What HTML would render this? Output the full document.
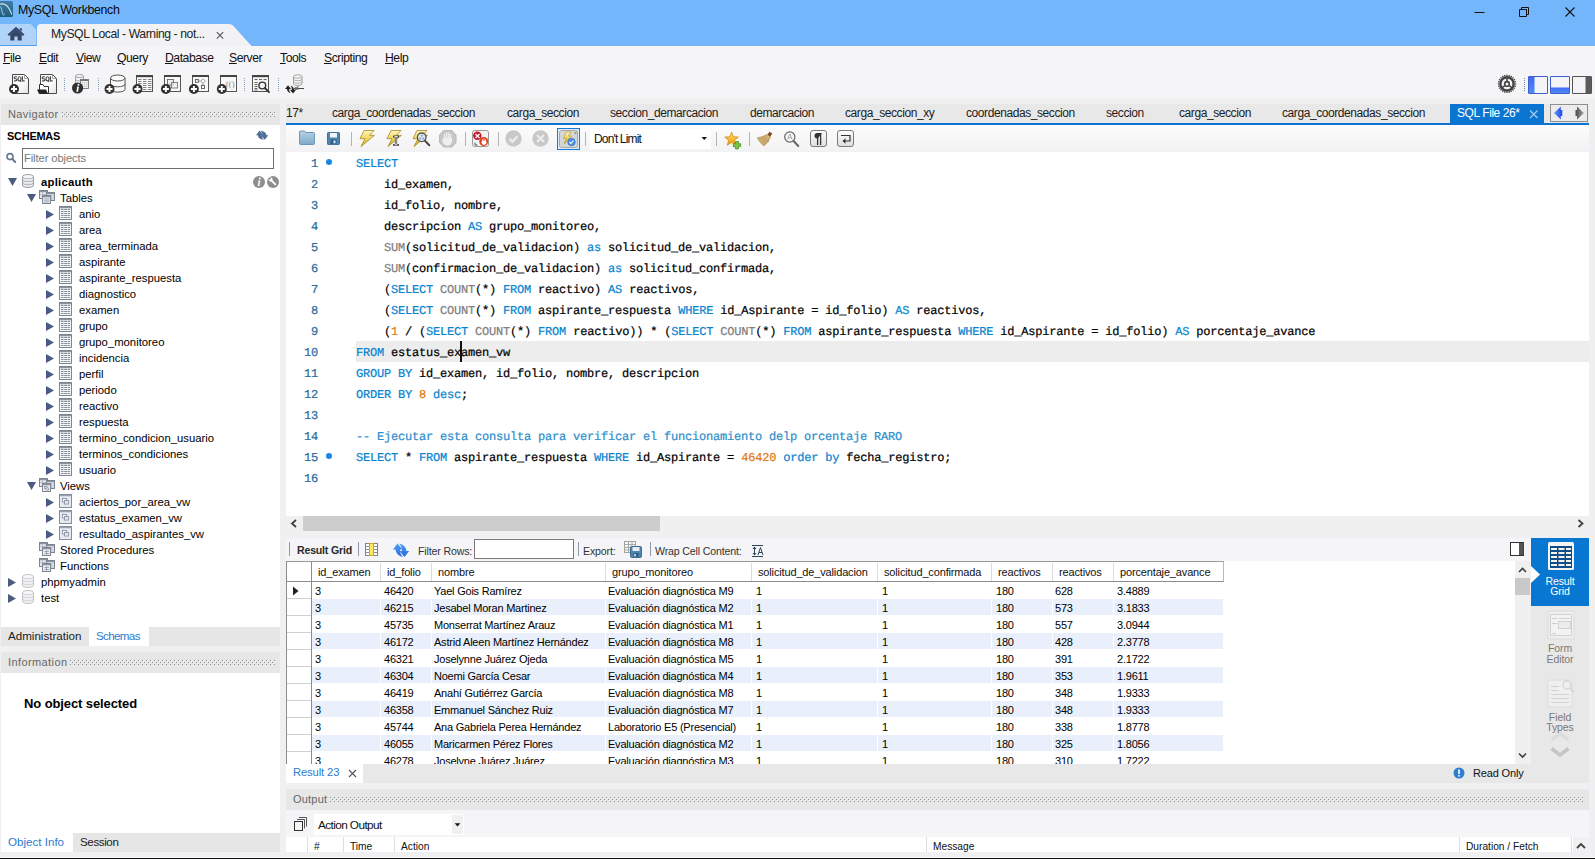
<!DOCTYPE html>
<html>
<head>
<meta charset="utf-8">
<title>MySQL Workbench</title>
<style>
*{box-sizing:border-box;margin:0;padding:0}
html,body{width:1595px;height:859px;overflow:hidden;background:#f0f0f2}
body{font-family:"Liberation Sans",sans-serif;font-size:11px;color:#000;position:relative}
.abs{position:absolute}
.t{position:absolute;white-space:pre;line-height:1}
/* title */
#titlebar{left:0;top:0;width:1595px;height:46px;background:#74b6fb}
#menubar{left:0;top:46px;width:1595px;height:56px;background:#f5f5f7}
.menu{font-size:12.2px;top:52px;color:#111;letter-spacing:-.45px}
.menu u{text-decoration-thickness:1px;text-underline-offset:1px}
/* left */
.hdr{background:#e7e7e7}
.hdr .t{color:#555;font-size:11.6px}
.tree{font-size:11.3px;color:#000}
/* editor */
.code{font-family:"Liberation Mono",monospace;text-rendering:geometricPrecision;font-size:12px;letter-spacing:-.2px;white-space:pre;position:absolute;left:356px;line-height:21px;height:21px;color:#000;-webkit-text-stroke:.22px currentColor}
.ln{font-family:"Liberation Mono",monospace;text-rendering:geometricPrecision;font-size:12px;letter-spacing:-.2px;position:absolute;width:32px;left:286.1px;text-align:right;line-height:21px;color:#2a6c9b;-webkit-text-stroke:.22px currentColor}
.k{color:#0784cf}
.f{color:#808080}
.n{color:#e07a10}
.c{color:#2d8fcc}
.bp{position:absolute;left:326px;width:6px;height:6px;border-radius:50%;background:#1787e6}
.etab{top:107px;font-size:12px;letter-spacing:-.42px;color:#1c1c1c}
/* grid */
.rt{font-size:10.6px;color:#333;letter-spacing:-.15px}
.sp{font-size:10.5px;text-align:center;letter-spacing:-.1px}
.gh{font-size:11px;letter-spacing:-.15px;color:#111}
.cell{font-size:11px;letter-spacing:-.22px;color:#000}
</style>
</head>
<body>
<svg width="0" height="0" style="position:absolute"><defs>
<pattern id="dp" x="0" y="0" width="4" height="4" patternUnits="userSpaceOnUse">
<rect x="0" y="0" width="1" height="1" fill="#8e8e8e"/><rect x="2" y="2" width="1" height="1" fill="#8e8e8e"/>
<rect x="1" y="1" width="1" height="1" fill="#f6f6f6"/><rect x="3" y="3" width="1" height="1" fill="#f6f6f6"/>
</pattern></defs></svg>
<!-- TITLE BAR -->
<div id="titlebar" class="abs">
  <!-- app icon -->
  <svg class="abs" style="left:0;top:1px" width="14" height="17" viewBox="0 0 14 17">
    <defs><linearGradient id="ai" x1="0" y1="0" x2="0" y2="1"><stop offset="0" stop-color="#3d7fa4"/><stop offset="1" stop-color="#1f5c80"/></linearGradient></defs><rect x="-2" y="0" width="15" height="16" rx="1.500" fill="url(#ai)"/>
    <path d="M0 3 C3.500 2.500 7 4 9 7.500 C10.500 10 11 11.500 11.800 13.500" stroke="#d5e6ef" stroke-width="1.100" fill="none"/>
    <path d="M.500 5.500 C1.800 7 1.500 9 2.200 11 C2.600 12.500 2.500 13.500 3.500 14 M3.500 14 C4.500 13.500 4 12.500 5 13" stroke="#bdd6e3" stroke-width=".9" fill="none"/>
  </svg>
  <div class="t" style="left:18px;top:4px;font-size:12.4px;letter-spacing:-.35px;color:#0a0a0a">MySQL Workbench</div>
  <!-- window controls -->
  <svg class="abs" style="left:1460px;top:0" width="135" height="24" viewBox="0 0 135 24">
    <path d="M14.5 12.5 H24.5" stroke="#111" stroke-width="1"/>
    <path d="M59.5 9.5 H66.5 V16.5 H59.5 Z M61.5 9.5 V7.5 H68.5 V14.5 H66.5" stroke="#111" stroke-width="1" fill="none"/>
    <path d="M105.5 7.5 L114.5 16.5 M114.5 7.5 L105.5 16.5" stroke="#111" stroke-width="1.1"/>
  </svg>
  <!-- home tab -->
  <svg class="abs" style="left:0;top:24px" width="260" height="22" viewBox="0 0 260 22">
    <path d="M0 0 H29.5 Q31 0 32 1 L36.2 5.700 V22 H0 Z" fill="#b1d3f8"/>
    <path d="M0 21.5 H36.5" stroke="#4f9fee" stroke-width="1"/>
    <path d="M37 22 V4 Q37 0 41 0 H229 Q231.5 0 233 1.5 L251.5 22 Z" fill="#f2f2f4"/>
    <!-- home icon -->
    <path d="M8.2 11.2 L16 4.2 L23.8 11.2" stroke="#33466a" stroke-width="2" fill="none" stroke-linejoin="miter"/>
    <path d="M19.6 4.3 h2.2 v3.2 l-2.2 -2 Z" fill="#33466a"/>
    <path d="M10.3 10.6 L16 5.6 L21.7 10.6 V16.5 H17.6 V12.4 H14.4 V16.5 H10.3 Z" fill="#33466a"/>
    <!-- close x -->
    <path d="M216.8 8.2 L223.2 14.6 M223.2 8.2 L216.8 14.6" stroke="#555" stroke-width="1.1"/>
  </svg>
  <div class="t" style="left:51px;top:28px;font-size:12.2px;letter-spacing:-.42px;color:#222">MySQL Local - Warning - not...</div>
</div>

<!-- MENU + TOOLBAR -->
<div id="menubar" class="abs">
  <div class="abs" style="left:0;top:52px;width:1595px;height:4px;background:#f0f0f0"></div>
</div>
<div class="t menu" style="left:3px"><u>F</u>ile</div>
<div class="t menu" style="left:39px"><u>E</u>dit</div>
<div class="t menu" style="left:76px"><u>V</u>iew</div>
<div class="t menu" style="left:117px"><u>Q</u>uery</div>
<div class="t menu" style="left:165px"><u>D</u>atabase</div>
<div class="t menu" style="left:229px"><u>S</u>erver</div>
<div class="t menu" style="left:280px"><u>T</u>ools</div>
<div class="t menu" style="left:324px"><u>S</u>cripting</div>
<div class="t menu" style="left:385px"><u>H</u>elp</div>

<!-- MAIN TOOLBAR ICONS -->
<svg class="abs" style="left:0;top:0" width="320" height="100" viewBox="0 0 320 100">
  <defs><linearGradient id="pg" x1="0" y1="0" x2="1" y2="1"><stop offset="0" stop-color="#fff"/><stop offset=".55" stop-color="#fbfbfb"/><stop offset="1" stop-color="#e2e2e2"/></linearGradient></defs>
  <!-- new sql -->
  <path d="M12.5 74.5 H24.5 L28.5 78.5 V93.5 H12.5 Z" fill="url(#pg)" stroke="#4a4a4a"/>
  <path d="M24.5 74.5 V78.5 H28.5" fill="none" stroke="#8a8a8a" stroke-width=".8"/>
  <path d="M17 76.7 H15.2 Q14.1 76.7 14.1 77.7 Q14.1 78.7 15.5 78.7 Q17 78.7 17 79.8 Q17 80.8 15.8 80.8 H14 M19.5 76.7 Q21.0 76.7 21.0 78.7 Q21.0 80.8 19.5 80.8 Q18.0 80.8 18.0 78.7 Q18.0 76.7 19.5 76.7 Z M19.799999999999997 80.4 L21.099999999999998 82.0 M22.4 76.2 V80.8 H24.7" fill="none" stroke="#4a4a4a" stroke-width="1.15"/>
  <circle cx="14" cy="89" r="5" fill="#333"/><path d="M11 89 H17 M14 86 V92" stroke="#fff" stroke-width="1.9"/>
  <!-- open sql -->
  <path d="M40.500 74.5 H52.5 L56.5 78.5 V93.5 H40.5 Z" fill="url(#pg)" stroke="#4a4a4a"/>
  <path d="M52.5 74.5 V78.5 H56.5" fill="none" stroke="#8a8a8a" stroke-width=".8"/>
  <path d="M45 76.7 H43.2 Q42.1 76.7 42.1 77.7 Q42.1 78.7 43.5 78.7 Q45 78.7 45 79.8 Q45 80.8 43.8 80.8 H42 M47.5 76.7 Q49.0 76.7 49.0 78.7 Q49.0 80.8 47.5 80.8 Q46.0 80.8 46.0 78.7 Q46.0 76.7 47.5 76.7 Z M47.8 80.4 L49.1 82.0 M50.4 76.2 V80.8 H52.699999999999996" fill="none" stroke="#4a4a4a" stroke-width="1.15"/>
  <path d="M39.500 84.500 H43 L44 86.500 H48.500 V93.500 H39.500 Z" fill="#fff" stroke="#333" stroke-width="1"/>
  <path d="M37 89.500 H46 L48 93.800 H39 Z" fill="#222"/>
  <path d="M64.5 78 V92" stroke="#8aa0c8" stroke-width="1" stroke-dasharray="1 1"/>
  <!-- info db -->
  <path d="M75.500 76 v9 a4 1.600 0 0 0 8 0 v-9" fill="#f4f4f4" stroke="#9a9a9a" stroke-width=".9"/>
  <ellipse cx="79.500" cy="76" rx="4" ry="1.600" fill="#f4f4f4" stroke="#9a9a9a" stroke-width=".9"/>
  <path d="M75.500 79.300 a4 1.600 0 0 0 8 0 M75.500 82.300 a4 1.600 0 0 0 8 0" fill="none" stroke="#9a9a9a" stroke-width=".8"/>
  <rect x="80.500" y="79.500" width="8" height="9" fill="#f2f2ee" stroke="#777" stroke-width=".9"/>
  <path d="M80.500 80.300 h8" stroke="#666" stroke-width="1.200"/>
  <path d="M81.500 82.500 h6 M81.500 84.500 h6 M81.500 86.500 h6" stroke="#aaa" stroke-width=".7" stroke-dasharray="1.500 .7"/>
  <circle cx="77.600" cy="88" r="5.600" fill="#2f2f2f"/>
  <circle cx="78.500" cy="84.700" r="1" fill="#fff"/><path d="M78.200 86.900 L77.200 91.200" stroke="#fff" stroke-width="1.600"/><path d="M76.800 87 h1.800 M76.200 91.300 h2" stroke="#fff" stroke-width=".8"/>
  <path d="M98.5 78 V92" stroke="#8aa0c8" stroke-width="1" stroke-dasharray="1 1"/>
  <!-- new db -->
  <path d="M110.500 78 v11.500 a7.250 2.600 0 0 0 14.500 0 v-11.500" fill="#fbfbfb" stroke="#555" stroke-width="1"/>
  <ellipse cx="117.750" cy="78" rx="7.250" ry="3" fill="#fbfbfb" stroke="#555" stroke-width="1"/>
  <path d="M110.500 84.200 a7.250 2.600 0 0 0 14.500 0" fill="none" stroke="#555" stroke-width="1"/>
  <circle cx="109.5" cy="89" r="5" fill="#333"/><path d="M106.5 89 H112.5 M109.5 86 V92" stroke="#fff" stroke-width="1.9"/>
  <!-- new table -->
  <rect x="136.500" y="75.500" width="16" height="16" fill="#fafaf8" stroke="#555"/>
  <rect x="136" y="75" width="17" height="2.200" fill="#444"/>
  <path d="M138 79.500 h3.500 m1.500 0 h3.500 m1.500 0 h3.500 M138 81.500 h3.500 m1.500 0 h3.500 m1.500 0 h3.500 M138 83.500 h3.500 m1.500 0 h3.500 m1.500 0 h3.500 M138 85.500 h3.500 m1.500 0 h3.500 m1.500 0 h3.500 M138 87.500 h3.500 m1.500 0 h3.500 m1.500 0 h3.500 M138 89.500 h3.500 m1.500 0 h3.500 m1.500 0 h3.500" stroke="#777" stroke-width=".9"/>
  <circle cx="137.5" cy="89" r="5" fill="#333"/><path d="M134.5 89 H140.5 M137.5 86 V92" stroke="#fff" stroke-width="1.9"/>
  <!-- new view -->
  <rect x="164.5" y="75.5" width="16" height="16" fill="#f8f8f6" stroke="#555" stroke-width="1"/><rect x="164" y="75" width="17" height="2" fill="#444"/>
  <rect x="167.500" y="79.500" width="6" height="5.500" fill="#eee" stroke="#666" stroke-width=".9"/>
  <rect x="171.500" y="82.500" width="6" height="5.500" fill="#eee" fill-opacity=".7" stroke="#777" stroke-width=".9"/>
  <circle cx="165.9" cy="89" r="5" fill="#333"/><path d="M162.9 89 H168.9 M165.9 86 V92" stroke="#fff" stroke-width="1.9"/>
  <!-- new proc -->
  <rect x="192.5" y="75.5" width="16" height="16" fill="#f8f8f6" stroke="#555" stroke-width="1"/><rect x="192" y="75" width="17" height="2" fill="#444"/>
  <rect x="195.500" y="79.500" width="2.800" height="2.800" fill="#fff" stroke="#555" stroke-width=".9"/>
  <path d="M198.500 81 h2 M203 83.200 v2.500" stroke="#777" stroke-width=".8"/>
  <path d="M203 78.800 l2.300 2.300 l-2.300 2.300 l-2.300 -2.300 Z" fill="#fff" stroke="#888" stroke-width=".8"/>
  <rect x="201.500" y="85.500" width="3" height="3" fill="#fff" stroke="#555" stroke-width=".9"/>
  <circle cx="193.9" cy="89" r="5" fill="#333"/><path d="M190.9 89 H196.9 M193.9 86 V92" stroke="#fff" stroke-width="1.9"/>
  <!-- new func -->
  <rect x="220.5" y="75.5" width="16" height="16" fill="#f8f8f6" stroke="#555" stroke-width="1"/><rect x="220" y="75" width="17" height="2" fill="#444"/>
  <text x="225.500" y="86.500" font-family="Liberation Serif" font-size="8.500" fill="#8a8a8a" letter-spacing=".3">f()</text>
  <circle cx="221.8" cy="89" r="5" fill="#333"/><path d="M218.8 89 H224.8 M221.8 86 V92" stroke="#fff" stroke-width="1.9"/>
  <path d="M244.5 78 V92" stroke="#8aa0c8" stroke-width="1" stroke-dasharray="1 1"/>
  <!-- search table -->
  <rect x="252.500" y="75.500" width="16" height="16" fill="#f6f6f4" stroke="#555"/>
  <rect x="252" y="75" width="17" height="2.200" fill="#444"/>
  <path d="M254.500 79.500 h3 m1.500 0 h3 m1.500 0 h3 M254.500 82.500 h3 M254.500 84.500 h3 M254.500 86.500 h3 M254.500 88.500 h3 M254.500 90 h3" stroke="#555" stroke-width=".9"/>
  <circle cx="262.300" cy="85.500" r="3.400" fill="#f4f4f4" stroke="#333" stroke-width="1.400"/>
  <path d="M264.800 88 L269 92.200" stroke="#333" stroke-width="1.800" stroke-linecap="round"/>
  <path d="M278.5 78 V92" stroke="#8aa0c8" stroke-width="1" stroke-dasharray="1 1"/>
  <!-- reconnect -->
  <path d="M293.500 76.500 v7.300 a4.250 1.700 0 0 0 8.500 0 v-7.300" fill="#f8f8f8" stroke="#999" stroke-width=".9"/>
  <ellipse cx="297.750" cy="76.500" rx="4.250" ry="1.700" fill="#f8f8f8" stroke="#999" stroke-width=".9"/>
  <path d="M293.500 79 a4.250 1.700 0 0 0 8.500 0 M293.500 81.500 a4.250 1.700 0 0 0 8.500 0" fill="none" stroke="#999" stroke-width=".8"/>
  <path d="M297.700 85.600 v2" stroke="#777" stroke-width=".9"/>
  <path d="M294.500 88.500 H304" stroke="#444" stroke-width="1"/>
  <path d="M295 87.300 h3.300 v2.400 h-3.300 l-1.200 -1.200 Z" fill="#666"/>
  <path d="M285 89 l3 -3.800 l3 3.800 h-2 q0 2.500 1.500 4 q-3.300 -.8 -3.500 -4 Z" fill="#222"/>
  <path d="M296 89.700 l-3 3.800 l-3 -3.800 h2 q0 -2.500 -1.500 -4 q3.300 .8 3.500 4 Z" fill="#222"/>
</svg>

<!-- TOP RIGHT ICONS -->
<svg class="abs" style="left:1490px;top:70px" width="105" height="28" viewBox="1490 70 105 28">
 <defs>
  <linearGradient id="lb" x1="0" y1="0" x2="0" y2="1"><stop offset="0" stop-color="#4068f4"/><stop offset="1" stop-color="#4d8df8"/></linearGradient>
 </defs>
 <path d="M1514.60 83.90 L1516.20 83.90 M1514.34 85.87 L1515.89 86.28 M1513.58 87.70 L1514.97 88.50 M1512.37 89.27 L1513.51 90.41 M1510.80 90.48 L1511.60 91.87 M1508.97 91.24 L1509.38 92.79 M1507.00 91.50 L1507.00 93.10 M1505.03 91.24 L1504.62 92.79 M1503.20 90.48 L1502.40 91.87 M1501.63 89.27 L1500.49 90.41 M1500.42 87.70 L1499.03 88.50 M1499.66 85.87 L1498.11 86.28 M1499.40 83.90 L1497.80 83.90 M1499.66 81.93 L1498.11 81.52 M1500.42 80.10 L1499.03 79.30 M1501.63 78.53 L1500.49 77.39 M1503.20 77.32 L1502.40 75.93 M1505.03 76.56 L1504.62 75.01 M1507.00 76.30 L1507.00 74.70 M1508.97 76.56 L1509.38 75.01 M1510.80 77.32 L1511.60 75.93 M1512.37 78.53 L1513.51 77.39 M1513.58 80.10 L1514.97 79.30 M1514.34 81.93 L1515.89 81.52 " stroke="#444" stroke-width="1.300"/>
 <circle cx="1507" cy="83.9" r="6.600" fill="#f5f5f7" stroke="#444" stroke-width="2.400"/>
 <circle cx="1507" cy="83.9" r="2.300" fill="#f5f5f7" stroke="#444" stroke-width="1.600"/>
 <path d="M1507 81.4 V77.9 M1504.8 85.5 L1501.8 88.10000000000001 M1509.2 85.5 L1512.2 88.10000000000001" stroke="#444" stroke-width="1.600"/>
  <path d="M1524.500 78 V92" stroke="#6f86a8" stroke-width="1" stroke-dasharray="1 1"/>
 <rect x="1528.500" y="76.500" width="19" height="17" rx=".3" fill="#f4f4f6" stroke="#3f5fd0"/>
 <rect x="1529" y="77" width="5.500" height="16" fill="url(#lb)"/>
 <rect x="1550.500" y="76.500" width="19" height="17" rx=".3" fill="#f4f4f6" stroke="#3f5fd0"/>
 <rect x="1551" y="87.500" width="18" height="5.500" fill="url(#lb)"/>
 <rect x="1572.500" y="76.500" width="19" height="17" rx=".3" fill="#f4f4f6" stroke="#555"/>
 <rect x="1585.500" y="77" width="5.500" height="16" fill="#5a5a5a"/>
</svg>

<!-- LEFT PANEL -->
<div id="left" class="abs" style="left:0;top:0;width:286px;height:859px">
  <div class="abs hdr" style="left:1px;top:104px;width:279px;height:21px"></div>
  <div class="t" style="left:8px;top:109px;font-size:11px;color:#666;letter-spacing:.4px">Navigator</div>
  <svg class="abs" style="left:62px;top:112px" width="214" height="5" viewBox="0 0 214 5"><rect x="0" y="0" width="214" height="5" fill="url(#dp)"/></svg>
  <div class="abs" style="left:1px;top:125px;width:279px;height:502px;background:#fff"></div>
  <div class="t" style="left:7px;top:131px;font-size:10.9px;font-weight:700;letter-spacing:-.2px">SCHEMAS</div>
  <svg class="abs" style="left:0;top:0" width="286" height="620" viewBox="0 0 286 620">
    <path d="M259.500 130.600 L263.500 135.200 H261.700 Q261.700 138 263.900 139.700 Q258.300 139.200 257.800 135.200 H256 Z" fill="#4f6f99"/>
    <path d="M264.800 139.800 L260.800 135.200 H262.600 Q262.600 132.400 260.400 130.700 Q266 131.200 266.500 135.200 H268.300 Z" fill="#4f6f99"/>
    <circle cx="10" cy="156.600" r="3" fill="none" stroke="#66788f" stroke-width="1.600"/>
    <path d="M12.300 159 L15.200 162" stroke="#66788f" stroke-width="2" stroke-linecap="round"/>
    <path d="M8 178 H17 L12.5 186 Z" fill="#4a5c80"/><path d="M22.5 176.7 v8.6 a5.5 2.2 0 0 0 11 0 v-8.6" fill="#e3e5e8" stroke="#9aa0a8" stroke-width="1"/><ellipse cx="28" cy="176.7" rx="5.5" ry="2.2" fill="#f7f7f8" stroke="#9aa0a8" stroke-width="1"/><path d="M22.5 179.8 a5.5 2.2 0 0 0 11 0 M22.5 182.8 a5.5 2.2 0 0 0 11 0" fill="none" stroke="#9aa0a8" stroke-width="1"/><path d="M23.2 178.2 a5 2 0 0 0 9.6 0 M23.2 181.2 a5 2 0 0 0 9.6 0 M23.2 184.2 a5 2 0 0 0 9.6 0" fill="none" stroke="#fff" stroke-opacity=".8" stroke-width=".8"/><circle cx="259" cy="182" r="6" fill="#8e8e8e"/><circle cx="259.900" cy="178.6" r="1" fill="#fff"/><path d="M259.600 180.8 L258.600 185.4" stroke="#fff" stroke-width="1.600"/><path d="M258.200 180.9 h1.800 M257.600 185.5 h2" stroke="#fff" stroke-width=".8"/><circle cx="273" cy="182" r="6" fill="#8e8e8e"/><path d="M270.3 179.3 l5 5" stroke="#fff" stroke-width="1.8" stroke-linecap="round"/><circle cx="270.6" cy="179.6" r="2" fill="#fff"/><circle cx="269.7" cy="178.7" r="1" fill="#8e8e8e"/><path d="M27 194 H36 L31.5 202 Z" fill="#4a5c80"/><rect x="39.5" y="190.5" width="8" height="8" fill="#e4e7ec" stroke="#7d8591" stroke-width="1"/><rect x="40" y="191" width="7" height="1.2" fill="#8b93a0"/><path d="M40 194.5 h7 M42.5 192 v6" stroke="#b4bac6" stroke-width=".8"/><rect x="46.5" y="192.5" width="8" height="8" fill="#e4e7ec" stroke="#7d8591" stroke-width="1"/><rect x="47" y="193" width="7" height="1.2" fill="#8b93a0"/><path d="M51.5 194.5 v5.5 M53 194.5 v5.5" stroke="#b4bac6" stroke-width=".7"/><rect x="42.5" y="195.5" width="8" height="8" fill="#eceef2" stroke="#7d8591" stroke-width="1"/><rect x="43" y="196" width="7" height="1.3" fill="#8b93a0"/><path d="M43.5 199 h6 M43.5 200.5 h6 M43.5 202 h6 M45 197.5 v5.5 M46.5 197.5 v5.5 M48 197.5 v5.5" stroke="#b0b7c4" stroke-width=".7"/><path d="M46 210.0 L54 214.5 L46 219.0 Z" fill="#4a5c80"/><rect x="59.5" y="206.5" width="12" height="13" fill="#f6f7f9" stroke="#7d8591" stroke-width="1"/><rect x="60" y="207" width="11" height="1.3" fill="#8b93a0"/><path d="M61 209.5 h2.5 m.7 0 h2.8 m.7 0 h2.3" stroke="#808999" stroke-width="1"/><path d="M61 211.5 h2.5 m.7 0 h2.8 m.7 0 h2.3" stroke="#808999" stroke-width="1"/><path d="M61 213.5 h2.5 m.7 0 h2.8 m.7 0 h2.3" stroke="#808999" stroke-width="1"/><path d="M61 215.5 h2.5 m.7 0 h2.8 m.7 0 h2.3" stroke="#808999" stroke-width="1"/><path d="M61 217.5 h2.5 m.7 0 h2.8 m.7 0 h2.3" stroke="#808999" stroke-width="1"/><path d="M46 226.0 L54 230.5 L46 235.0 Z" fill="#4a5c80"/><rect x="59.5" y="222.5" width="12" height="13" fill="#f6f7f9" stroke="#7d8591" stroke-width="1"/><rect x="60" y="223" width="11" height="1.3" fill="#8b93a0"/><path d="M61 225.5 h2.5 m.7 0 h2.8 m.7 0 h2.3" stroke="#808999" stroke-width="1"/><path d="M61 227.5 h2.5 m.7 0 h2.8 m.7 0 h2.3" stroke="#808999" stroke-width="1"/><path d="M61 229.5 h2.5 m.7 0 h2.8 m.7 0 h2.3" stroke="#808999" stroke-width="1"/><path d="M61 231.5 h2.5 m.7 0 h2.8 m.7 0 h2.3" stroke="#808999" stroke-width="1"/><path d="M61 233.5 h2.5 m.7 0 h2.8 m.7 0 h2.3" stroke="#808999" stroke-width="1"/><path d="M46 242.0 L54 246.5 L46 251.0 Z" fill="#4a5c80"/><rect x="59.5" y="238.5" width="12" height="13" fill="#f6f7f9" stroke="#7d8591" stroke-width="1"/><rect x="60" y="239" width="11" height="1.3" fill="#8b93a0"/><path d="M61 241.5 h2.5 m.7 0 h2.8 m.7 0 h2.3" stroke="#808999" stroke-width="1"/><path d="M61 243.5 h2.5 m.7 0 h2.8 m.7 0 h2.3" stroke="#808999" stroke-width="1"/><path d="M61 245.5 h2.5 m.7 0 h2.8 m.7 0 h2.3" stroke="#808999" stroke-width="1"/><path d="M61 247.5 h2.5 m.7 0 h2.8 m.7 0 h2.3" stroke="#808999" stroke-width="1"/><path d="M61 249.5 h2.5 m.7 0 h2.8 m.7 0 h2.3" stroke="#808999" stroke-width="1"/><path d="M46 258.0 L54 262.5 L46 267.0 Z" fill="#4a5c80"/><rect x="59.5" y="254.5" width="12" height="13" fill="#f6f7f9" stroke="#7d8591" stroke-width="1"/><rect x="60" y="255" width="11" height="1.3" fill="#8b93a0"/><path d="M61 257.5 h2.5 m.7 0 h2.8 m.7 0 h2.3" stroke="#808999" stroke-width="1"/><path d="M61 259.5 h2.5 m.7 0 h2.8 m.7 0 h2.3" stroke="#808999" stroke-width="1"/><path d="M61 261.5 h2.5 m.7 0 h2.8 m.7 0 h2.3" stroke="#808999" stroke-width="1"/><path d="M61 263.5 h2.5 m.7 0 h2.8 m.7 0 h2.3" stroke="#808999" stroke-width="1"/><path d="M61 265.5 h2.5 m.7 0 h2.8 m.7 0 h2.3" stroke="#808999" stroke-width="1"/><path d="M46 274.0 L54 278.5 L46 283.0 Z" fill="#4a5c80"/><rect x="59.5" y="270.5" width="12" height="13" fill="#f6f7f9" stroke="#7d8591" stroke-width="1"/><rect x="60" y="271" width="11" height="1.3" fill="#8b93a0"/><path d="M61 273.5 h2.5 m.7 0 h2.8 m.7 0 h2.3" stroke="#808999" stroke-width="1"/><path d="M61 275.5 h2.5 m.7 0 h2.8 m.7 0 h2.3" stroke="#808999" stroke-width="1"/><path d="M61 277.5 h2.5 m.7 0 h2.8 m.7 0 h2.3" stroke="#808999" stroke-width="1"/><path d="M61 279.5 h2.5 m.7 0 h2.8 m.7 0 h2.3" stroke="#808999" stroke-width="1"/><path d="M61 281.5 h2.5 m.7 0 h2.8 m.7 0 h2.3" stroke="#808999" stroke-width="1"/><path d="M46 290.0 L54 294.5 L46 299.0 Z" fill="#4a5c80"/><rect x="59.5" y="286.5" width="12" height="13" fill="#f6f7f9" stroke="#7d8591" stroke-width="1"/><rect x="60" y="287" width="11" height="1.3" fill="#8b93a0"/><path d="M61 289.5 h2.5 m.7 0 h2.8 m.7 0 h2.3" stroke="#808999" stroke-width="1"/><path d="M61 291.5 h2.5 m.7 0 h2.8 m.7 0 h2.3" stroke="#808999" stroke-width="1"/><path d="M61 293.5 h2.5 m.7 0 h2.8 m.7 0 h2.3" stroke="#808999" stroke-width="1"/><path d="M61 295.5 h2.5 m.7 0 h2.8 m.7 0 h2.3" stroke="#808999" stroke-width="1"/><path d="M61 297.5 h2.5 m.7 0 h2.8 m.7 0 h2.3" stroke="#808999" stroke-width="1"/><path d="M46 306.0 L54 310.5 L46 315.0 Z" fill="#4a5c80"/><rect x="59.5" y="302.5" width="12" height="13" fill="#f6f7f9" stroke="#7d8591" stroke-width="1"/><rect x="60" y="303" width="11" height="1.3" fill="#8b93a0"/><path d="M61 305.5 h2.5 m.7 0 h2.8 m.7 0 h2.3" stroke="#808999" stroke-width="1"/><path d="M61 307.5 h2.5 m.7 0 h2.8 m.7 0 h2.3" stroke="#808999" stroke-width="1"/><path d="M61 309.5 h2.5 m.7 0 h2.8 m.7 0 h2.3" stroke="#808999" stroke-width="1"/><path d="M61 311.5 h2.5 m.7 0 h2.8 m.7 0 h2.3" stroke="#808999" stroke-width="1"/><path d="M61 313.5 h2.5 m.7 0 h2.8 m.7 0 h2.3" stroke="#808999" stroke-width="1"/><path d="M46 322.0 L54 326.5 L46 331.0 Z" fill="#4a5c80"/><rect x="59.5" y="318.5" width="12" height="13" fill="#f6f7f9" stroke="#7d8591" stroke-width="1"/><rect x="60" y="319" width="11" height="1.3" fill="#8b93a0"/><path d="M61 321.5 h2.5 m.7 0 h2.8 m.7 0 h2.3" stroke="#808999" stroke-width="1"/><path d="M61 323.5 h2.5 m.7 0 h2.8 m.7 0 h2.3" stroke="#808999" stroke-width="1"/><path d="M61 325.5 h2.5 m.7 0 h2.8 m.7 0 h2.3" stroke="#808999" stroke-width="1"/><path d="M61 327.5 h2.5 m.7 0 h2.8 m.7 0 h2.3" stroke="#808999" stroke-width="1"/><path d="M61 329.5 h2.5 m.7 0 h2.8 m.7 0 h2.3" stroke="#808999" stroke-width="1"/><path d="M46 338.0 L54 342.5 L46 347.0 Z" fill="#4a5c80"/><rect x="59.5" y="334.5" width="12" height="13" fill="#f6f7f9" stroke="#7d8591" stroke-width="1"/><rect x="60" y="335" width="11" height="1.3" fill="#8b93a0"/><path d="M61 337.5 h2.5 m.7 0 h2.8 m.7 0 h2.3" stroke="#808999" stroke-width="1"/><path d="M61 339.5 h2.5 m.7 0 h2.8 m.7 0 h2.3" stroke="#808999" stroke-width="1"/><path d="M61 341.5 h2.5 m.7 0 h2.8 m.7 0 h2.3" stroke="#808999" stroke-width="1"/><path d="M61 343.5 h2.5 m.7 0 h2.8 m.7 0 h2.3" stroke="#808999" stroke-width="1"/><path d="M61 345.5 h2.5 m.7 0 h2.8 m.7 0 h2.3" stroke="#808999" stroke-width="1"/><path d="M46 354.0 L54 358.5 L46 363.0 Z" fill="#4a5c80"/><rect x="59.5" y="350.5" width="12" height="13" fill="#f6f7f9" stroke="#7d8591" stroke-width="1"/><rect x="60" y="351" width="11" height="1.3" fill="#8b93a0"/><path d="M61 353.5 h2.5 m.7 0 h2.8 m.7 0 h2.3" stroke="#808999" stroke-width="1"/><path d="M61 355.5 h2.5 m.7 0 h2.8 m.7 0 h2.3" stroke="#808999" stroke-width="1"/><path d="M61 357.5 h2.5 m.7 0 h2.8 m.7 0 h2.3" stroke="#808999" stroke-width="1"/><path d="M61 359.5 h2.5 m.7 0 h2.8 m.7 0 h2.3" stroke="#808999" stroke-width="1"/><path d="M61 361.5 h2.5 m.7 0 h2.8 m.7 0 h2.3" stroke="#808999" stroke-width="1"/><path d="M46 370.0 L54 374.5 L46 379.0 Z" fill="#4a5c80"/><rect x="59.5" y="366.5" width="12" height="13" fill="#f6f7f9" stroke="#7d8591" stroke-width="1"/><rect x="60" y="367" width="11" height="1.3" fill="#8b93a0"/><path d="M61 369.5 h2.5 m.7 0 h2.8 m.7 0 h2.3" stroke="#808999" stroke-width="1"/><path d="M61 371.5 h2.5 m.7 0 h2.8 m.7 0 h2.3" stroke="#808999" stroke-width="1"/><path d="M61 373.5 h2.5 m.7 0 h2.8 m.7 0 h2.3" stroke="#808999" stroke-width="1"/><path d="M61 375.5 h2.5 m.7 0 h2.8 m.7 0 h2.3" stroke="#808999" stroke-width="1"/><path d="M61 377.5 h2.5 m.7 0 h2.8 m.7 0 h2.3" stroke="#808999" stroke-width="1"/><path d="M46 386.0 L54 390.5 L46 395.0 Z" fill="#4a5c80"/><rect x="59.5" y="382.5" width="12" height="13" fill="#f6f7f9" stroke="#7d8591" stroke-width="1"/><rect x="60" y="383" width="11" height="1.3" fill="#8b93a0"/><path d="M61 385.5 h2.5 m.7 0 h2.8 m.7 0 h2.3" stroke="#808999" stroke-width="1"/><path d="M61 387.5 h2.5 m.7 0 h2.8 m.7 0 h2.3" stroke="#808999" stroke-width="1"/><path d="M61 389.5 h2.5 m.7 0 h2.8 m.7 0 h2.3" stroke="#808999" stroke-width="1"/><path d="M61 391.5 h2.5 m.7 0 h2.8 m.7 0 h2.3" stroke="#808999" stroke-width="1"/><path d="M61 393.5 h2.5 m.7 0 h2.8 m.7 0 h2.3" stroke="#808999" stroke-width="1"/><path d="M46 402.0 L54 406.5 L46 411.0 Z" fill="#4a5c80"/><rect x="59.5" y="398.5" width="12" height="13" fill="#f6f7f9" stroke="#7d8591" stroke-width="1"/><rect x="60" y="399" width="11" height="1.3" fill="#8b93a0"/><path d="M61 401.5 h2.5 m.7 0 h2.8 m.7 0 h2.3" stroke="#808999" stroke-width="1"/><path d="M61 403.5 h2.5 m.7 0 h2.8 m.7 0 h2.3" stroke="#808999" stroke-width="1"/><path d="M61 405.5 h2.5 m.7 0 h2.8 m.7 0 h2.3" stroke="#808999" stroke-width="1"/><path d="M61 407.5 h2.5 m.7 0 h2.8 m.7 0 h2.3" stroke="#808999" stroke-width="1"/><path d="M61 409.5 h2.5 m.7 0 h2.8 m.7 0 h2.3" stroke="#808999" stroke-width="1"/><path d="M46 418.0 L54 422.5 L46 427.0 Z" fill="#4a5c80"/><rect x="59.5" y="414.5" width="12" height="13" fill="#f6f7f9" stroke="#7d8591" stroke-width="1"/><rect x="60" y="415" width="11" height="1.3" fill="#8b93a0"/><path d="M61 417.5 h2.5 m.7 0 h2.8 m.7 0 h2.3" stroke="#808999" stroke-width="1"/><path d="M61 419.5 h2.5 m.7 0 h2.8 m.7 0 h2.3" stroke="#808999" stroke-width="1"/><path d="M61 421.5 h2.5 m.7 0 h2.8 m.7 0 h2.3" stroke="#808999" stroke-width="1"/><path d="M61 423.5 h2.5 m.7 0 h2.8 m.7 0 h2.3" stroke="#808999" stroke-width="1"/><path d="M61 425.5 h2.5 m.7 0 h2.8 m.7 0 h2.3" stroke="#808999" stroke-width="1"/><path d="M46 434.0 L54 438.5 L46 443.0 Z" fill="#4a5c80"/><rect x="59.5" y="430.5" width="12" height="13" fill="#f6f7f9" stroke="#7d8591" stroke-width="1"/><rect x="60" y="431" width="11" height="1.3" fill="#8b93a0"/><path d="M61 433.5 h2.5 m.7 0 h2.8 m.7 0 h2.3" stroke="#808999" stroke-width="1"/><path d="M61 435.5 h2.5 m.7 0 h2.8 m.7 0 h2.3" stroke="#808999" stroke-width="1"/><path d="M61 437.5 h2.5 m.7 0 h2.8 m.7 0 h2.3" stroke="#808999" stroke-width="1"/><path d="M61 439.5 h2.5 m.7 0 h2.8 m.7 0 h2.3" stroke="#808999" stroke-width="1"/><path d="M61 441.5 h2.5 m.7 0 h2.8 m.7 0 h2.3" stroke="#808999" stroke-width="1"/><path d="M46 450.0 L54 454.5 L46 459.0 Z" fill="#4a5c80"/><rect x="59.5" y="446.5" width="12" height="13" fill="#f6f7f9" stroke="#7d8591" stroke-width="1"/><rect x="60" y="447" width="11" height="1.3" fill="#8b93a0"/><path d="M61 449.5 h2.5 m.7 0 h2.8 m.7 0 h2.3" stroke="#808999" stroke-width="1"/><path d="M61 451.5 h2.5 m.7 0 h2.8 m.7 0 h2.3" stroke="#808999" stroke-width="1"/><path d="M61 453.5 h2.5 m.7 0 h2.8 m.7 0 h2.3" stroke="#808999" stroke-width="1"/><path d="M61 455.5 h2.5 m.7 0 h2.8 m.7 0 h2.3" stroke="#808999" stroke-width="1"/><path d="M61 457.5 h2.5 m.7 0 h2.8 m.7 0 h2.3" stroke="#808999" stroke-width="1"/><path d="M46 466.0 L54 470.5 L46 475.0 Z" fill="#4a5c80"/><rect x="59.5" y="462.5" width="12" height="13" fill="#f6f7f9" stroke="#7d8591" stroke-width="1"/><rect x="60" y="463" width="11" height="1.3" fill="#8b93a0"/><path d="M61 465.5 h2.5 m.7 0 h2.8 m.7 0 h2.3" stroke="#808999" stroke-width="1"/><path d="M61 467.5 h2.5 m.7 0 h2.8 m.7 0 h2.3" stroke="#808999" stroke-width="1"/><path d="M61 469.5 h2.5 m.7 0 h2.8 m.7 0 h2.3" stroke="#808999" stroke-width="1"/><path d="M61 471.5 h2.5 m.7 0 h2.8 m.7 0 h2.3" stroke="#808999" stroke-width="1"/><path d="M61 473.5 h2.5 m.7 0 h2.8 m.7 0 h2.3" stroke="#808999" stroke-width="1"/><path d="M27 482 H36 L31.5 490 Z" fill="#4a5c80"/><rect x="39.5" y="478.5" width="8" height="8" fill="#e4e7ec" stroke="#7d8591" stroke-width="1"/><rect x="40" y="479" width="7" height="1.2" fill="#8b93a0"/><path d="M40 482.5 h7 M42.5 480 v6" stroke="#b4bac6" stroke-width=".8"/><rect x="46.5" y="480.5" width="8" height="8" fill="#e4e7ec" stroke="#7d8591" stroke-width="1"/><rect x="47" y="481" width="7" height="1.2" fill="#8b93a0"/><path d="M51.5 482.5 v5.5 M53 482.5 v5.5" stroke="#b4bac6" stroke-width=".7"/><rect x="42.5" y="483.5" width="8" height="8" fill="#eceef2" stroke="#7d8591" stroke-width="1"/><rect x="43" y="484" width="7" height="1.3" fill="#8b93a0"/><rect x="44.5" y="486.5" width="2.5" height="2" fill="#fff" stroke="#8a93a2" stroke-width=".8"/><rect x="46" y="488" width="2.5" height="2" fill="#fff" stroke="#8a93a2" stroke-width=".8"/><path d="M46 498.0 L54 502.5 L46 507.0 Z" fill="#4a5c80"/><rect x="59.5" y="494.5" width="12" height="13" fill="#e6e9ed" stroke="#858e9d" stroke-width="1"/><rect x="60" y="495" width="11" height="1.2" fill="#9aa2af"/><rect x="62.5" y="498.5" width="4" height="3.5" fill="#fff" stroke="#8a93a2" stroke-width=".9"/><rect x="64.5" y="500.5" width="4" height="3.5" fill="#fff" fill-opacity=".6" stroke="#8a93a2" stroke-width=".9"/><path d="M46 514.0 L54 518.5 L46 523.0 Z" fill="#4a5c80"/><rect x="59.5" y="510.5" width="12" height="13" fill="#e6e9ed" stroke="#858e9d" stroke-width="1"/><rect x="60" y="511" width="11" height="1.2" fill="#9aa2af"/><rect x="62.5" y="514.5" width="4" height="3.5" fill="#fff" stroke="#8a93a2" stroke-width=".9"/><rect x="64.5" y="516.5" width="4" height="3.5" fill="#fff" fill-opacity=".6" stroke="#8a93a2" stroke-width=".9"/><path d="M46 530.0 L54 534.5 L46 539.0 Z" fill="#4a5c80"/><rect x="59.5" y="526.5" width="12" height="13" fill="#e6e9ed" stroke="#858e9d" stroke-width="1"/><rect x="60" y="527" width="11" height="1.2" fill="#9aa2af"/><rect x="62.5" y="530.5" width="4" height="3.5" fill="#fff" stroke="#8a93a2" stroke-width=".9"/><rect x="64.5" y="532.5" width="4" height="3.5" fill="#fff" fill-opacity=".6" stroke="#8a93a2" stroke-width=".9"/><rect x="39.5" y="542.5" width="8" height="8" fill="#e4e7ec" stroke="#7d8591" stroke-width="1"/><rect x="40" y="543" width="7" height="1.2" fill="#8b93a0"/><path d="M40 546.5 h7 M42.5 544 v6" stroke="#b4bac6" stroke-width=".8"/><rect x="46.5" y="544.5" width="8" height="8" fill="#e4e7ec" stroke="#7d8591" stroke-width="1"/><rect x="47" y="545" width="7" height="1.2" fill="#8b93a0"/><path d="M51.5 546.5 v5.5 M53 546.5 v5.5" stroke="#b4bac6" stroke-width=".7"/><rect x="42.5" y="547.5" width="8" height="8" fill="#eceef2" stroke="#7d8591" stroke-width="1"/><rect x="43" y="548" width="7" height="1.3" fill="#8b93a0"/><path d="M44.5 551.5 h4.5 M46.5 550.5 v4 M44.5 553.5 h4.5" stroke="#8a93a2" stroke-width=".8"/><rect x="39.5" y="558.5" width="8" height="8" fill="#e4e7ec" stroke="#7d8591" stroke-width="1"/><rect x="40" y="559" width="7" height="1.2" fill="#8b93a0"/><path d="M40 562.5 h7 M42.5 560 v6" stroke="#b4bac6" stroke-width=".8"/><rect x="46.5" y="560.5" width="8" height="8" fill="#e4e7ec" stroke="#7d8591" stroke-width="1"/><rect x="47" y="561" width="7" height="1.2" fill="#8b93a0"/><path d="M51.5 562.5 v5.5 M53 562.5 v5.5" stroke="#b4bac6" stroke-width=".7"/><rect x="42.5" y="563.5" width="8" height="8" fill="#eceef2" stroke="#7d8591" stroke-width="1"/><rect x="43" y="564" width="7" height="1.3" fill="#8b93a0"/><path d="M44.5 567.5 h4.5 M46.5 566.5 v4 M44.5 569.5 h4.5" stroke="#8a93a2" stroke-width=".8"/><path d="M8 578.0 L16 582.5 L8 587.0 Z" fill="#4a5c80"/><path d="M22.5 576.7 v8.6 a5.5 2.2 0 0 0 11 0 v-8.6" fill="#eeeff1" stroke="#c2c5ca" stroke-width="1"/><ellipse cx="28" cy="576.7" rx="5.5" ry="2.2" fill="#f8f8f9" stroke="#c2c5ca" stroke-width="1"/><path d="M22.5 579.8 a5.5 2.2 0 0 0 11 0 M22.5 582.8 a5.5 2.2 0 0 0 11 0" fill="none" stroke="#c2c5ca" stroke-width="1"/><path d="M23.2 578.2 a5 2 0 0 0 9.6 0 M23.2 581.2 a5 2 0 0 0 9.6 0 M23.2 584.2 a5 2 0 0 0 9.6 0" fill="none" stroke="#fff" stroke-opacity=".8" stroke-width=".8"/><path d="M8 594.0 L16 598.5 L8 603.0 Z" fill="#4a5c80"/><path d="M22.5 592.7 v8.6 a5.5 2.2 0 0 0 11 0 v-8.6" fill="#eeeff1" stroke="#c2c5ca" stroke-width="1"/><ellipse cx="28" cy="592.7" rx="5.5" ry="2.2" fill="#f8f8f9" stroke="#c2c5ca" stroke-width="1"/><path d="M22.5 595.8 a5.5 2.2 0 0 0 11 0 M22.5 598.8 a5.5 2.2 0 0 0 11 0" fill="none" stroke="#c2c5ca" stroke-width="1"/><path d="M23.2 594.2 a5 2 0 0 0 9.6 0 M23.2 597.2 a5 2 0 0 0 9.6 0 M23.2 600.2 a5 2 0 0 0 9.6 0" fill="none" stroke="#fff" stroke-opacity=".8" stroke-width=".8"/>
  </svg>
  <div class="abs" style="left:22px;top:148px;width:252px;height:21px;background:#fff;border:1px solid #6e6e6e"></div>
  <div class="t" style="left:24px;top:153px;font-size:11.2px;color:#777;letter-spacing:-.1px">Filter objects</div>
  <div class="t tree" style="left:41px;top:177px;font-weight:700;letter-spacing:.25px">aplicauth</div><div class="t tree" style="left:60px;top:193px;">Tables</div><div class="t tree" style="left:79px;top:209px;">anio</div><div class="t tree" style="left:79px;top:225px;">area</div><div class="t tree" style="left:79px;top:241px;">area_terminada</div><div class="t tree" style="left:79px;top:257px;">aspirante</div><div class="t tree" style="left:79px;top:273px;">aspirante_respuesta</div><div class="t tree" style="left:79px;top:289px;">diagnostico</div><div class="t tree" style="left:79px;top:305px;">examen</div><div class="t tree" style="left:79px;top:321px;">grupo</div><div class="t tree" style="left:79px;top:337px;">grupo_monitoreo</div><div class="t tree" style="left:79px;top:353px;">incidencia</div><div class="t tree" style="left:79px;top:369px;">perfil</div><div class="t tree" style="left:79px;top:385px;">periodo</div><div class="t tree" style="left:79px;top:401px;">reactivo</div><div class="t tree" style="left:79px;top:417px;">respuesta</div><div class="t tree" style="left:79px;top:433px;">termino_condicion_usuario</div><div class="t tree" style="left:79px;top:449px;">terminos_condiciones</div><div class="t tree" style="left:79px;top:465px;">usuario</div><div class="t tree" style="left:60px;top:481px;">Views</div><div class="t tree" style="left:79px;top:497px;">aciertos_por_area_vw</div><div class="t tree" style="left:79px;top:513px;">estatus_examen_vw</div><div class="t tree" style="left:79px;top:529px;">resultado_aspirantes_vw</div><div class="t tree" style="left:60px;top:545px;">Stored Procedures</div><div class="t tree" style="left:60px;top:561px;">Functions</div><div class="t tree" style="left:41px;top:577px;">phpmyadmin</div><div class="t tree" style="left:41px;top:593px;">test</div>
  <div class="abs" style="left:1px;top:627px;width:279px;height:19px;background:#e6e6e6"></div>
  <div class="abs" style="left:89px;top:627px;width:60px;height:19px;background:#fff"></div>
  <div class="t" style="left:8px;top:630px;font-size:11.6px;color:#1a1a1a">Administration</div>
  <div class="t" style="left:96px;top:630px;font-size:11.6px;color:#2e7bd1;letter-spacing:-.65px">Schemas</div>
  <div class="abs hdr" style="left:1px;top:652px;width:279px;height:21px"></div>
  <div class="t" style="left:8px;top:657px;font-size:11px;color:#666;letter-spacing:.4px">Information</div>
  <svg class="abs" style="left:70px;top:660px" width="206" height="5" viewBox="0 0 206 5"><rect x="0" y="0" width="206" height="5" fill="url(#dp)"/></svg>
  <div class="abs" style="left:1px;top:673px;width:279px;height:160px;background:#fff"></div>
  <div class="t" style="left:24px;top:697px;font-size:13px;font-weight:700;letter-spacing:-.1px">No object selected</div>
  <div class="abs" style="left:1px;top:833px;width:279px;height:19px;background:#e6e6e6"></div>
  <div class="abs" style="left:1px;top:833px;width:72px;height:19px;background:#fff"></div>
  <div class="t" style="left:8px;top:836px;font-size:11.6px;color:#2e7bd1">Object Info</div>
  <div class="t" style="left:80px;top:836px;font-size:11.6px;color:#1a1a1a;letter-spacing:-.4px">Session</div>
</div>
<div class="abs" style="left:0;top:857px;width:1595px;height:1px;background:#fbfbfc"></div><div class="abs" style="left:0;top:858px;width:1595px;height:1px;background:#0e0e08"></div>

<!-- EDITOR -->
<div id="editor" class="abs" style="left:0;top:0;width:1595px;height:540px">
  <div class="abs" style="left:286px;top:104px;width:1303px;height:19px;background:#e8e8e8"></div>
  <div class="abs" style="left:286px;top:123px;width:1303px;height:2px;background:#0f74d1"></div>
  <div class="t etab" style="left:286px">17*</div><div class="t etab" style="left:332px">carga_coordenadas_seccion</div><div class="t etab" style="left:507px">carga_seccion</div><div class="t etab" style="left:610px">seccion_demarcacion</div><div class="t etab" style="left:750px">demarcacion</div><div class="t etab" style="left:845px">carga_seccion_xy</div><div class="t etab" style="left:966px">coordenadas_seccion</div><div class="t etab" style="left:1106px">seccion</div><div class="t etab" style="left:1179px">carga_seccion</div><div class="t etab" style="left:1282px">carga_coordenadas_seccion</div>
  <div class="abs" style="left:1450px;top:104px;width:94px;height:19px;background:#0b76d2"></div>
  <div class="t etab" style="left:1457px;color:#fff">SQL File 26*</div>
  <svg class="abs" style="left:1525px;top:104px" width="70" height="20" viewBox="1525 104 70 20">
    <path d="M1530 110.500 l7.500 7.500 M1537.500 110.500 l-7.500 7.500" stroke="#a9cff2" stroke-width="1.100"/>
    <rect x="1550.500" y="104.500" width="37" height="17" fill="#ececec" stroke="#8f8f8f"/>
    <defs><linearGradient id="na" x1="0" y1="0" x2="1" y2="0"><stop offset="0" stop-color="#5a9cff"/><stop offset="1" stop-color="#2346e6"/></linearGradient>
    <linearGradient id="nb" x1="0" y1="0" x2="1" y2="0"><stop offset="0" stop-color="#4a4a4a"/><stop offset="1" stop-color="#a0a0a0"/></linearGradient></defs>
    <path d="M1554 113 L1560.800 106.500 V110 H1562.300 V116 H1560.800 V119.500 Z" fill="url(#na)"/>
    <path d="M1583.800 113 L1577 106.500 V110 H1575.500 V116 H1577 V119.500 Z" fill="url(#nb)"/>
  </svg>
  <div class="abs" style="left:286px;top:125px;width:1303px;height:27px;background:linear-gradient(#fcfcfc,#f2f2f4)"></div>
  
<svg class="abs" style="left:286px;top:125px" width="600" height="27" viewBox="286 125 600 27">
 <defs>
  <linearGradient id="bg" x1="0" y1="0" x2="0" y2="1"><stop offset="0" stop-color="#fdf6bf"/><stop offset=".55" stop-color="#edd257"/><stop offset="1" stop-color="#c9a227"/></linearGradient>
  <linearGradient id="btn" x1="0" y1="0" x2="0" y2="1"><stop offset="0" stop-color="#fdfdfd"/><stop offset="1" stop-color="#dedede"/></linearGradient>
  <linearGradient id="sg" x1="0" y1="0" x2="0" y2="1"><stop offset="0" stop-color="#ffe27a"/><stop offset=".6" stop-color="#f7b52c"/><stop offset="1" stop-color="#e89a16"/></linearGradient>
  <linearGradient id="fg" x1="0" y1="0" x2="0" y2="1"><stop offset="0" stop-color="#b7d2e6"/><stop offset="1" stop-color="#7fa9c9"/></linearGradient>
 </defs>
 <!-- folder -->
 <path d="M299.500 132 q0 -1 1 -1 h3.500 q1 0 1.500 1.500 h8 q1 0 1 1 v10 q0 1 -1 1 h-13 q-1 0 -1 -1 Z" fill="url(#fg)" stroke="#6a97ba" stroke-width="1"/>
 <!-- save -->
 <rect x="327.500" y="132.500" width="12" height="12" rx=".8" fill="#4f86af" stroke="#3f7199"/>
 <rect x="330" y="133" width="7" height="4.500" fill="#f1f5f9"/><rect x="330.500" y="139.500" width="6" height="4.500" fill="#2f5f86"/><rect x="333.500" y="140.500" width="2" height="2.800" fill="#dfe9f1"/>
 <path d="M351.5 132 V146" stroke="#b4b4b4" stroke-width="1"/>
 <path d="M364 130.500 H374 L369.5 135.300 H374.5 L361 146.500 L365 138.700 H360 Z" fill="url(#bg)" stroke="#a98a1c" stroke-width=".8" stroke-linejoin="round"/>
 <path d="M391 130.500 H401 L396.5 135.300 H401.5 L388 146.500 L392 138.700 H387 Z" fill="url(#bg)" stroke="#a98a1c" stroke-width=".8" stroke-linejoin="round"/>
 <path d="M394 136.500 h4 M396 136.500 v8.500 M394 145 h4" stroke="#333" stroke-width="2.200" stroke-linecap="round"/><path d="M394.300 136.500 h3.400 M396 136.500 v8.500 M394.300 145 h3.400" stroke="#f2f2f2" stroke-width=".9"/>
 <path d="M417 130.500 H427 L422.5 135.300 H427.5 L414 146.500 L418 138.700 H413 Z" fill="url(#bg)" stroke="#a98a1c" stroke-width=".8" stroke-linejoin="round"/>
 <circle cx="421.700" cy="137.300" r="4.300" fill="#dbe9f5" fill-opacity=".9" stroke="#555" stroke-width="1.300"/><circle cx="421.700" cy="135.800" r="1" fill="#7ea6dc"/><circle cx="420.200" cy="138.500" r="1" fill="#7ea6dc"/><circle cx="423.200" cy="138.500" r="1" fill="#7ea6dc"/>
 <path d="M424.800 140.600 L429.300 145.300" stroke="#444" stroke-width="2" stroke-linecap="round"/>
 <!-- stop hand -->
 <path d="M443.500 130.500 h8.500 l4 4.500 v7.500 l-4 4.500 h-8.500 l-4 -4.500 v-7.500 Z" fill="#c6c6c6" stroke="#bababa"/>
 <path d="M444.500 139 v-4.500 M446.500 138.500 v-5.500 M448.500 138.500 v-5.500 M450.500 139 v-4.500 M443.800 138.500 h7.500 v3 q-1 3.500 -4 3.500 q-2.500 0 -4.500 -4 Z" stroke="#efefef" stroke-width="1.400" fill="#efefef" stroke-linecap="round"/>
 <path d="M465.5 132 V146" stroke="#b4b4b4" stroke-width="1"/>
 <!-- stop-on-error -->
 <rect x="472.500" y="130.500" width="16" height="16" rx="2" fill="#f3f3f3" stroke="#9a9a9a"/>
 <circle cx="477.300" cy="135.800" r="4.200" fill="#c9152c"/><path d="M475.500 134 l4 4 M479.500 134 l-4 4" stroke="#fff" stroke-width="1.300"/>
 <circle cx="483.700" cy="141.500" r="4.500" fill="#e4411f"/><path d="M482.500 142 v-2.500 M484 141.500 v-3 M485.500 142 v-2.500 M482 141.500 h4 v1.500 q-.5 1.500 -2 1.500 t-2 -1.500 Z" stroke="#fff" stroke-width=".9" fill="#fff"/>
 <path d="M475 142.500 v2.500 h2.500" stroke="#555" stroke-width="1" fill="none"/>
 <path d="M498.5 132 V146" stroke="#b4b4b4" stroke-width="1"/>
 <circle cx="513.500" cy="138.500" r="8.200" fill="#c8c8c8"/><path d="M509.500 138.800 l3 3 l5 -5.500" stroke="#ededed" stroke-width="2.200" fill="none"/>
 <circle cx="540.500" cy="138.500" r="8.200" fill="#c8c8c8"/><path d="M537 135 l7 7 M544 135 l-7 7" stroke="#ededed" stroke-width="2.200"/>
 <!-- toggled autocommit -->
 <rect x="557.500" y="128.500" width="22" height="21" fill="#dcebf9" stroke="#1b7ad6" stroke-width="1"/>
 <rect x="559.500" y="130.500" width="18" height="17" rx="2" fill="#d6d6d6" stroke="#a8a8a8"/>
 <path d="M566 132 h5 l-2.500 4 h3 l-7.500 8 l2.500 -5.500 h-3 Z" fill="url(#bg)" stroke="#b98d1c" stroke-width=".6"/>
 <circle cx="571.500" cy="142" r="3.800" fill="#4a8fe0" stroke="#2e6fc0" stroke-width=".6"/><path d="M569.500 142 l1.500 1.500 l2.500 -3" stroke="#fff" stroke-width="1.100" fill="none"/>
 <circle cx="575.500" cy="133" r="1" fill="#6aa84f"/>
 <path d="M585.5 132 V146" stroke="#b4b4b4" stroke-width="1"/>
 <!-- dropdown -->
 <rect x="590" y="129" width="121" height="20" fill="#fff"/>
 <path d="M701.500 137 h5.500 l-2.750 3 Z" fill="#111"/>
 <path d="M716.5 132 V146" stroke="#b4b4b4" stroke-width="1"/>
 <!-- star -->
 <path d="M731.60 132.10 L733.42 136.79 L738.45 137.08 L734.55 140.26 L735.83 145.12 L731.60 142.40 L727.37 145.12 L728.65 140.26 L724.75 137.08 L729.78 136.79 Z" fill="url(#sg)" stroke="#d08a12" stroke-width=".8" stroke-linejoin="round"/>
 <path d="M735.500 141.500 h3 v2.200 h2.200 v3 h-2.200 v2.200 h-3 v-2.200 h-2.200 v-3 h2.200 Z" fill="#7bc142" stroke="#3f8a22" stroke-width=".7"/>
 <path d="M749.5 132 V146" stroke="#b4b4b4" stroke-width="1"/>
 <!-- broom -->
 <path d="M769.500 131.800 l2.800 1.800 l-2.600 3.600 l-2.800 -1.800 Z" fill="#7a4a22"/>
 <path d="M757.300 137.800 q5 -.5 9.800 -3.300 l3.500 2.500 q-2 4.500 -6.500 8.800 q-3.500 -1.800 -6.800 -8 Z" fill="#d8b97c" stroke="#a78245" stroke-width=".7"/>
 <path d="M759.500 139.500 l6.800 -3 M760.800 141.300 l6.800 -3.300 M762.200 143 l6.500 -3.600 M763.500 144.600 l5.500 -3.600" stroke="#a78245" stroke-width=".7"/>
 <!-- magnifier -->
 <circle cx="789.800" cy="137" r="5.100" fill="#f6f6f6" stroke="#666" stroke-width="1.200"/>
 <path d="M787.500 139.500 l2.300 -5.500 l2.300 5.500 M788.400 137.800 h2.800" stroke="#9a9a9a" stroke-width=".8" fill="none"/>
 <path d="M793.600 141 L798.300 146" stroke="#666" stroke-width="2" stroke-linecap="round"/>
 <!-- pilcrow -->
 <rect x="810.500" y="130.500" width="16" height="16" rx="2.500" fill="url(#btn)" stroke="#7a7a7a"/>
 <path d="M817.600 133.500 v11.500 M820.600 133.500 v11.500" stroke="#333" stroke-width="1.300"/><path d="M822 133 h-4.800 a2.700 2.700 0 0 0 0 5.400 h.6 Z" fill="#333"/>
 <!-- wrap -->
 <rect x="837.500" y="130.500" width="16" height="16" rx="2.500" fill="url(#btn)" stroke="#7a7a7a"/>
 <path d="M841 135.500 h9 v5.500 h-6" stroke="#333" stroke-width="1.200" fill="none"/><path d="M845.500 138.300 l-3 2.700 l3 2.700 Z" fill="#333"/>
</svg>
<div class="t" style="left:594px;top:133px;font-size:12px;letter-spacing:-.85px;color:#111">Don't Limit</div>

  <div class="abs" style="left:286px;top:152px;width:1303px;height:364px;background:#fff"></div>
  <div class="abs" style="left:356px;top:341px;width:1233px;height:21px;background:#ededed"></div>
  <div class="ln" style="top:154px">1</div><div class="code" style="top:154px"><span class="k">SELECT</span></div><div class="ln" style="top:175px">2</div><div class="code" style="top:175px">    id_examen,</div><div class="ln" style="top:196px">3</div><div class="code" style="top:196px">    id_folio, nombre,</div><div class="ln" style="top:217px">4</div><div class="code" style="top:217px">    descripcion <span class="k">AS</span> grupo_monitoreo,</div><div class="ln" style="top:238px">5</div><div class="code" style="top:238px">    <span class="f">SUM</span>(solicitud_de_validacion) <span class="k">as</span> solicitud_de_validacion,</div><div class="ln" style="top:259px">6</div><div class="code" style="top:259px">    <span class="f">SUM</span>(confirmacion_de_validacion) <span class="k">as</span> solicitud_confirmada,</div><div class="ln" style="top:280px">7</div><div class="code" style="top:280px">    (<span class="k">SELECT</span> <span class="f">COUNT</span>(*) <span class="k">FROM</span> reactivo) <span class="k">AS</span> reactivos,</div><div class="ln" style="top:301px">8</div><div class="code" style="top:301px">    (<span class="k">SELECT</span> <span class="f">COUNT</span>(*) <span class="k">FROM</span> aspirante_respuesta <span class="k">WHERE</span> id_Aspirante = id_folio) <span class="k">AS</span> reactivos,</div><div class="ln" style="top:322px">9</div><div class="code" style="top:322px">    (<span class="n">1</span> / (<span class="k">SELECT</span> <span class="f">COUNT</span>(*) <span class="k">FROM</span> reactivo)) * (<span class="k">SELECT</span> <span class="f">COUNT</span>(*) <span class="k">FROM</span> aspirante_respuesta <span class="k">WHERE</span> id_Aspirante = id_folio) <span class="k">AS</span> porcentaje_avance</div><div class="ln" style="top:343px">10</div><div class="code" style="top:343px"><span class="k">FROM</span> estatus_examen_vw</div><div class="ln" style="top:364px">11</div><div class="code" style="top:364px"><span class="k">GROUP BY</span> id_examen, id_folio, nombre, descripcion</div><div class="ln" style="top:385px">12</div><div class="code" style="top:385px"><span class="k">ORDER BY</span> <span class="n">8</span> <span class="k">desc</span>;</div><div class="ln" style="top:406px">13</div><div class="ln" style="top:427px">14</div><div class="code" style="top:427px"><span class="c">-- Ejecutar esta consulta para verificar el funcionamiento delp orcentaje RARO</span></div><div class="ln" style="top:448px">15</div><div class="code" style="top:448px"><span class="k">SELECT</span> * <span class="k">FROM</span> aspirante_respuesta <span class="k">WHERE</span> id_Aspirante = <span class="n">46420</span> <span class="k">order by</span> fecha_registro;</div><div class="ln" style="top:469px">16</div>
  <div class="bp" style="top:159.3px"></div><div class="bp" style="top:453.3px"></div>
  <div class="abs" style="left:460px;top:341px;width:2px;height:21px;background:#111"></div>
  <!-- h scrollbar -->
  <div class="abs" style="left:286px;top:516px;width:1303px;height:17px;background:#f0f0f0"></div>
  <div class="abs" style="left:303px;top:516px;width:357px;height:15px;background:#cdcdcd"></div>
  <svg class="abs" style="left:286px;top:515px" width="1303" height="17" viewBox="0 0 1303 17">
    <path d="M10 5 L6 8.500 L10 12" stroke="#404040" stroke-width="1.800" fill="none"/>
    <path d="M1292.500 5 L1296.500 8.500 L1292.500 12" stroke="#404040" stroke-width="1.800" fill="none"/>
  </svg>
</div>

<!-- RESULT -->
<div id="result" class="abs" style="left:0;top:0;width:1595px;height:0">
<div class="abs" style="left:286px;top:538px;width:1245px;height:23px;background:#f5f5f7"></div>
<div class="abs" style="left:286px;top:561px;width:1229px;height:203px;background:#fff;overflow:hidden">
<div class="t cell" style="left:29px;top:25px">3</div>
<div class="t cell" style="left:98px;top:25px">46420</div>
<div class="t cell" style="left:148px;top:25px">Yael Gois Ramírez</div>
<div class="t cell" style="left:322px;top:25px">Evaluación diagnóstica M9</div>
<div class="t cell" style="left:470px;top:25px">1</div>
<div class="t cell" style="left:596px;top:25px">1</div>
<div class="t cell" style="left:710px;top:25px">180</div>
<div class="t cell" style="left:769px;top:25px">628</div>
<div class="t cell" style="left:831px;top:25px">3.4889</div>
<div class="abs" style="left:1px;top:37px;width:24px;height:1px;background:#d0d0d0"></div>
<div class="abs" style="left:26px;top:38px;width:68px;height:16px;background:#e9f0fb"></div>
<div class="abs" style="left:95px;top:38px;width:50px;height:16px;background:#e9f0fb"></div>
<div class="abs" style="left:146px;top:38px;width:173px;height:16px;background:#e9f0fb"></div>
<div class="abs" style="left:320px;top:38px;width:145px;height:16px;background:#e9f0fb"></div>
<div class="abs" style="left:466px;top:38px;width:125px;height:16px;background:#e9f0fb"></div>
<div class="abs" style="left:592px;top:38px;width:113px;height:16px;background:#e9f0fb"></div>
<div class="abs" style="left:706px;top:38px;width:60px;height:16px;background:#e9f0fb"></div>
<div class="abs" style="left:767px;top:38px;width:60px;height:16px;background:#e9f0fb"></div>
<div class="abs" style="left:828px;top:38px;width:109px;height:16px;background:#e9f0fb"></div>
<div class="t cell" style="left:29px;top:42px">3</div>
<div class="t cell" style="left:98px;top:42px">46215</div>
<div class="t cell" style="left:148px;top:42px">Jesabel Moran Martinez</div>
<div class="t cell" style="left:322px;top:42px">Evaluación diagnóstica M2</div>
<div class="t cell" style="left:470px;top:42px">1</div>
<div class="t cell" style="left:596px;top:42px">1</div>
<div class="t cell" style="left:710px;top:42px">180</div>
<div class="t cell" style="left:769px;top:42px">573</div>
<div class="t cell" style="left:831px;top:42px">3.1833</div>
<div class="abs" style="left:1px;top:54px;width:24px;height:1px;background:#d0d0d0"></div>
<div class="t cell" style="left:29px;top:59px">3</div>
<div class="t cell" style="left:98px;top:59px">45735</div>
<div class="t cell" style="left:148px;top:59px">Monserrat Martínez Arauz</div>
<div class="t cell" style="left:322px;top:59px">Evaluación diagnóstica M1</div>
<div class="t cell" style="left:470px;top:59px">1</div>
<div class="t cell" style="left:596px;top:59px">1</div>
<div class="t cell" style="left:710px;top:59px">180</div>
<div class="t cell" style="left:769px;top:59px">557</div>
<div class="t cell" style="left:831px;top:59px">3.0944</div>
<div class="abs" style="left:1px;top:71px;width:24px;height:1px;background:#d0d0d0"></div>
<div class="abs" style="left:26px;top:72px;width:68px;height:16px;background:#e9f0fb"></div>
<div class="abs" style="left:95px;top:72px;width:50px;height:16px;background:#e9f0fb"></div>
<div class="abs" style="left:146px;top:72px;width:173px;height:16px;background:#e9f0fb"></div>
<div class="abs" style="left:320px;top:72px;width:145px;height:16px;background:#e9f0fb"></div>
<div class="abs" style="left:466px;top:72px;width:125px;height:16px;background:#e9f0fb"></div>
<div class="abs" style="left:592px;top:72px;width:113px;height:16px;background:#e9f0fb"></div>
<div class="abs" style="left:706px;top:72px;width:60px;height:16px;background:#e9f0fb"></div>
<div class="abs" style="left:767px;top:72px;width:60px;height:16px;background:#e9f0fb"></div>
<div class="abs" style="left:828px;top:72px;width:109px;height:16px;background:#e9f0fb"></div>
<div class="t cell" style="left:29px;top:76px">3</div>
<div class="t cell" style="left:98px;top:76px">46172</div>
<div class="t cell" style="left:148px;top:76px">Astrid Aleen Martínez Hernández</div>
<div class="t cell" style="left:322px;top:76px">Evaluación diagnóstica M8</div>
<div class="t cell" style="left:470px;top:76px">1</div>
<div class="t cell" style="left:596px;top:76px">1</div>
<div class="t cell" style="left:710px;top:76px">180</div>
<div class="t cell" style="left:769px;top:76px">428</div>
<div class="t cell" style="left:831px;top:76px">2.3778</div>
<div class="abs" style="left:1px;top:88px;width:24px;height:1px;background:#d0d0d0"></div>
<div class="t cell" style="left:29px;top:93px">3</div>
<div class="t cell" style="left:98px;top:93px">46321</div>
<div class="t cell" style="left:148px;top:93px">Joselynne Juárez Ojeda</div>
<div class="t cell" style="left:322px;top:93px">Evaluación diagnóstica M5</div>
<div class="t cell" style="left:470px;top:93px">1</div>
<div class="t cell" style="left:596px;top:93px">1</div>
<div class="t cell" style="left:710px;top:93px">180</div>
<div class="t cell" style="left:769px;top:93px">391</div>
<div class="t cell" style="left:831px;top:93px">2.1722</div>
<div class="abs" style="left:1px;top:105px;width:24px;height:1px;background:#d0d0d0"></div>
<div class="abs" style="left:26px;top:106px;width:68px;height:16px;background:#e9f0fb"></div>
<div class="abs" style="left:95px;top:106px;width:50px;height:16px;background:#e9f0fb"></div>
<div class="abs" style="left:146px;top:106px;width:173px;height:16px;background:#e9f0fb"></div>
<div class="abs" style="left:320px;top:106px;width:145px;height:16px;background:#e9f0fb"></div>
<div class="abs" style="left:466px;top:106px;width:125px;height:16px;background:#e9f0fb"></div>
<div class="abs" style="left:592px;top:106px;width:113px;height:16px;background:#e9f0fb"></div>
<div class="abs" style="left:706px;top:106px;width:60px;height:16px;background:#e9f0fb"></div>
<div class="abs" style="left:767px;top:106px;width:60px;height:16px;background:#e9f0fb"></div>
<div class="abs" style="left:828px;top:106px;width:109px;height:16px;background:#e9f0fb"></div>
<div class="t cell" style="left:29px;top:110px">3</div>
<div class="t cell" style="left:98px;top:110px">46304</div>
<div class="t cell" style="left:148px;top:110px">Noemi García Cesar</div>
<div class="t cell" style="left:322px;top:110px">Evaluación diagnóstica M4</div>
<div class="t cell" style="left:470px;top:110px">1</div>
<div class="t cell" style="left:596px;top:110px">1</div>
<div class="t cell" style="left:710px;top:110px">180</div>
<div class="t cell" style="left:769px;top:110px">353</div>
<div class="t cell" style="left:831px;top:110px">1.9611</div>
<div class="abs" style="left:1px;top:122px;width:24px;height:1px;background:#d0d0d0"></div>
<div class="t cell" style="left:29px;top:127px">3</div>
<div class="t cell" style="left:98px;top:127px">46419</div>
<div class="t cell" style="left:148px;top:127px">Anahí Gutiérrez García</div>
<div class="t cell" style="left:322px;top:127px">Evaluación diagnóstica M8</div>
<div class="t cell" style="left:470px;top:127px">1</div>
<div class="t cell" style="left:596px;top:127px">1</div>
<div class="t cell" style="left:710px;top:127px">180</div>
<div class="t cell" style="left:769px;top:127px">348</div>
<div class="t cell" style="left:831px;top:127px">1.9333</div>
<div class="abs" style="left:1px;top:139px;width:24px;height:1px;background:#d0d0d0"></div>
<div class="abs" style="left:26px;top:140px;width:68px;height:16px;background:#e9f0fb"></div>
<div class="abs" style="left:95px;top:140px;width:50px;height:16px;background:#e9f0fb"></div>
<div class="abs" style="left:146px;top:140px;width:173px;height:16px;background:#e9f0fb"></div>
<div class="abs" style="left:320px;top:140px;width:145px;height:16px;background:#e9f0fb"></div>
<div class="abs" style="left:466px;top:140px;width:125px;height:16px;background:#e9f0fb"></div>
<div class="abs" style="left:592px;top:140px;width:113px;height:16px;background:#e9f0fb"></div>
<div class="abs" style="left:706px;top:140px;width:60px;height:16px;background:#e9f0fb"></div>
<div class="abs" style="left:767px;top:140px;width:60px;height:16px;background:#e9f0fb"></div>
<div class="abs" style="left:828px;top:140px;width:109px;height:16px;background:#e9f0fb"></div>
<div class="t cell" style="left:29px;top:144px">3</div>
<div class="t cell" style="left:98px;top:144px">46358</div>
<div class="t cell" style="left:148px;top:144px">Emmanuel Sánchez Ruiz</div>
<div class="t cell" style="left:322px;top:144px">Evaluación diagnóstica M7</div>
<div class="t cell" style="left:470px;top:144px">1</div>
<div class="t cell" style="left:596px;top:144px">1</div>
<div class="t cell" style="left:710px;top:144px">180</div>
<div class="t cell" style="left:769px;top:144px">348</div>
<div class="t cell" style="left:831px;top:144px">1.9333</div>
<div class="abs" style="left:1px;top:156px;width:24px;height:1px;background:#d0d0d0"></div>
<div class="t cell" style="left:29px;top:161px">3</div>
<div class="t cell" style="left:98px;top:161px">45744</div>
<div class="t cell" style="left:148px;top:161px">Ana Gabriela Perea Hernández</div>
<div class="t cell" style="left:322px;top:161px">Laboratorio E5 (Presencial)</div>
<div class="t cell" style="left:470px;top:161px">1</div>
<div class="t cell" style="left:596px;top:161px">1</div>
<div class="t cell" style="left:710px;top:161px">180</div>
<div class="t cell" style="left:769px;top:161px">338</div>
<div class="t cell" style="left:831px;top:161px">1.8778</div>
<div class="abs" style="left:1px;top:173px;width:24px;height:1px;background:#d0d0d0"></div>
<div class="abs" style="left:26px;top:174px;width:68px;height:16px;background:#e9f0fb"></div>
<div class="abs" style="left:95px;top:174px;width:50px;height:16px;background:#e9f0fb"></div>
<div class="abs" style="left:146px;top:174px;width:173px;height:16px;background:#e9f0fb"></div>
<div class="abs" style="left:320px;top:174px;width:145px;height:16px;background:#e9f0fb"></div>
<div class="abs" style="left:466px;top:174px;width:125px;height:16px;background:#e9f0fb"></div>
<div class="abs" style="left:592px;top:174px;width:113px;height:16px;background:#e9f0fb"></div>
<div class="abs" style="left:706px;top:174px;width:60px;height:16px;background:#e9f0fb"></div>
<div class="abs" style="left:767px;top:174px;width:60px;height:16px;background:#e9f0fb"></div>
<div class="abs" style="left:828px;top:174px;width:109px;height:16px;background:#e9f0fb"></div>
<div class="t cell" style="left:29px;top:178px">3</div>
<div class="t cell" style="left:98px;top:178px">46055</div>
<div class="t cell" style="left:148px;top:178px">Maricarmen Pérez Flores</div>
<div class="t cell" style="left:322px;top:178px">Evaluación diagnóstica M2</div>
<div class="t cell" style="left:470px;top:178px">1</div>
<div class="t cell" style="left:596px;top:178px">1</div>
<div class="t cell" style="left:710px;top:178px">180</div>
<div class="t cell" style="left:769px;top:178px">325</div>
<div class="t cell" style="left:831px;top:178px">1.8056</div>
<div class="abs" style="left:1px;top:190px;width:24px;height:1px;background:#d0d0d0"></div>
<div class="t cell" style="left:29px;top:195px">3</div>
<div class="t cell" style="left:98px;top:195px">46278</div>
<div class="t cell" style="left:148px;top:195px">Joselyne Juárez Juárez</div>
<div class="t cell" style="left:322px;top:195px">Evaluación diagnóstica M3</div>
<div class="t cell" style="left:470px;top:195px">1</div>
<div class="t cell" style="left:596px;top:195px">1</div>
<div class="t cell" style="left:710px;top:195px">180</div>
<div class="t cell" style="left:769px;top:195px">310</div>
<div class="t cell" style="left:831px;top:195px">1.7222</div>
<div class="abs" style="left:1px;top:207px;width:24px;height:1px;background:#d0d0d0"></div>
<div class="abs" style="left:0;top:0;width:938px;height:21px;background:#fff;border-top:1px solid #9a9a9a;border-bottom:1px solid #8c8c8c;border-right:1px solid #b8b8b8"></div>
<div class="t gh" style="left:32px;top:6px">id_examen</div>
<div class="t gh" style="left:101px;top:6px">id_folio</div>
<div class="t gh" style="left:152px;top:6px">nombre</div>
<div class="t gh" style="left:326px;top:6px">grupo_monitoreo</div>
<div class="t gh" style="left:472px;top:6px">solicitud_de_validacion</div>
<div class="t gh" style="left:598px;top:6px">solicitud_confirmada</div>
<div class="t gh" style="left:712px;top:6px">reactivos</div>
<div class="t gh" style="left:773px;top:6px">reactivos</div>
<div class="t gh" style="left:834px;top:6px">porcentaje_avance</div>
<div class="abs" style="left:94px;top:2px;width:1px;height:18px;background:#dcdcdc"></div>
<div class="abs" style="left:145px;top:2px;width:1px;height:18px;background:#dcdcdc"></div>
<div class="abs" style="left:319px;top:2px;width:1px;height:18px;background:#dcdcdc"></div>
<div class="abs" style="left:465px;top:2px;width:1px;height:18px;background:#dcdcdc"></div>
<div class="abs" style="left:591px;top:2px;width:1px;height:18px;background:#dcdcdc"></div>
<div class="abs" style="left:705px;top:2px;width:1px;height:18px;background:#dcdcdc"></div>
<div class="abs" style="left:766px;top:2px;width:1px;height:18px;background:#dcdcdc"></div>
<div class="abs" style="left:827px;top:2px;width:1px;height:18px;background:#dcdcdc"></div>
<div class="abs" style="left:0;top:0;width:1px;height:203px;background:#8c8c8c"></div>
<div class="abs" style="left:25px;top:0;width:1px;height:203px;background:#8c8c8c"></div>
<svg class="abs" style="left:6px;top:25px" width="8" height="10" viewBox="0 0 8 10"><path d="M1 .500 L6.500 5 L1 9.500 Z" fill="#222"/></svg>
</div>
<div class="abs" style="left:1515px;top:561px;width:16px;height:203px;background:#f0f0f0"></div>
<div class="abs" style="left:1515px;top:578px;width:15px;height:17px;background:#c9c9c9"></div>
<svg class="abs" style="left:1515px;top:561px" width="16" height="203" viewBox="0 0 16 203"><path d="M4 11 L7.500 7.500 L11 11" stroke="#404040" stroke-width="1.600" fill="none"/><path d="M4 192.500 L7.500 196 L11 192.500" stroke="#404040" stroke-width="1.600" fill="none"/></svg>
<svg class="abs" style="left:286px;top:538px" width="1245" height="23" viewBox="286 538 1245 23">
 <path d="M289.500 542 V556 M358.500 542 V556 M578.500 542 V556 M650.500 542 V556" stroke="#8d98ab" stroke-width="1"/>
 <rect x="365.500" y="543.500" width="12" height="12" fill="#fdfdfd" stroke="#7f848d"/>
 <path d="M366 546.500 h11 M366 549.500 h11 M366 552.500 h11" stroke="#8a8f99" stroke-width="1"/>
 <rect x="369.500" y="543.500" width="4" height="12" fill="#ffe85e" stroke="#e7a200"/>
 <defs><linearGradient id="rf" x1="0" y1="0" x2="0" y2="1"><stop offset="0" stop-color="#4f9ff2"/><stop offset="1" stop-color="#2b68e0"/></linearGradient></defs>
 <path d="M397.500 543.500 L402.500 549.500 H400 Q400 554 403 557 Q396 555.500 395.500 549.500 H393 Z" fill="url(#rf)"/>
 <path d="M404.500 557 L399.500 551 H402 Q402 546.500 399 543.500 Q406 545 406.500 551 H409.200 Z" fill="url(#rf)"/>
 <rect x="474.500" y="539.500" width="99" height="19" fill="#fff" stroke="#7a7a7a"/>
 <rect x="624.500" y="541.500" width="11" height="11" fill="#f6f6f6" stroke="#a3a3a3"/>
 <path d="M625 544.500 h10 M625 547.500 h10 M625 550 h10 M628.500 542 v10 M632 542 v10" stroke="#a9a9a9" stroke-width="1"/>
 <rect x="630.500" y="546.500" width="11" height="11" rx="1" fill="#4f84ae" stroke="#3b6d96"/>
 <rect x="632.500" y="547" width="7" height="4" fill="#e6eef5"/><rect x="633.500" y="553" width="5" height="4" fill="#2f5f86"/><rect x="634.300" y="554" width="1.500" height="2.500" fill="#dfe9f1"/>
 <path d="M752 545.500 h11 M752 556.500 h11" stroke="#2d4560" stroke-width="1"/>
 <path d="M754.500 548 v6" stroke="#2d4560" stroke-width="1"/>
 <path d="M752.500 549 l2 -2.500 l2 2.500 Z M752.500 553 l2 2.500 l2 -2.500 Z" fill="#2d4560"/>
 <path d="M758 555 L760.500 547.500 L763 555 M759 552.500 H762" stroke="#2d4560" stroke-width="1" fill="none"/>
 <rect x="1510.500" y="542.500" width="13" height="13" fill="#fff" stroke="#333"/><rect x="1519" y="543" width="4.500" height="12" fill="#555"/>
</svg>
<div class="t" style="left:297px;top:545px;font-size:10.600px;font-weight:700;color:#2a2a2a;letter-spacing:-.2px">Result Grid</div>
<div class="t rt" style="left:418px;top:546px">Filter Rows:</div>
<div class="t rt" style="left:583px;top:546px">Export:</div>
<div class="t rt" style="left:655px;top:546px">Wrap Cell Content:</div>
<div class="abs" style="left:1531px;top:538px;width:58px;height:226px;background:#e8e8e8"></div>
<div class="abs" style="left:1531px;top:538px;width:58px;height:68px;background:#0877d1"></div>
<svg class="abs" style="left:1531px;top:538px" width="58" height="226" viewBox="1531 538 58 226">
 <path d="M1531 566 L1540 574.500 L1531 583 Z" fill="#fff"/>
 <rect x="1548" y="542" width="26" height="28" rx="1.500" fill="#f4f4f2"/>
 <rect x="1550" y="546" width="22" height="22" fill="#0c4d8c"/>
 <path d="M1551 549 h6 m1.500 0 h6 m1.500 0 h5 M1551 553 h6 m1.500 0 h6 m1.500 0 h5 M1551 557 h6 m1.500 0 h6 m1.500 0 h5 M1551 561 h6 m1.500 0 h6 m1.500 0 h5 M1551 565 h6 m1.500 0 h6 m1.500 0 h5" stroke="#f7f3ea" stroke-width="2"/>
 <!-- form editor -->
 <rect x="1548" y="611" width="26" height="28" rx="1.500" fill="#efefef" stroke="#dcdcdc"/>
 <rect x="1550.500" y="614.500" width="21" height="21" fill="#f3f3f3" stroke="#d2d2d2"/>
 <path d="M1552 618.500 h5 M1559 618.500 h11 M1552 623.500 h5 M1552 633.500 h4" stroke="#cfcfcf" stroke-width="1"/>
 <rect x="1558.500" y="621.500" width="12" height="7" fill="#ececec" stroke="#d2d2d2"/>
 <!-- field types -->
 <rect x="1548" y="680" width="24" height="27" rx="1.500" fill="#efefef" stroke="#dcdcdc"/>
 <path d="M1551 686.500 h8 M1551 690.500 h8 M1551 694.500 h18 M1551 698.500 h18 M1551 702.500 h18" stroke="#d2d2d2" stroke-width="1.200"/>
 <circle cx="1567" cy="685" r="4" fill="#efefef" stroke="#d6d6d6" stroke-width="1.500"/><path d="M1570 688 l4 4" stroke="#d6d6d6" stroke-width="2"/>
 <path d="M1551.500 740 l8.500 -6.500 l8.500 6.500" stroke="#dcdcdc" stroke-width="3.600" fill="none"/>
 <path d="M1551.500 748.500 l8.500 6.500 l8.500 -6.500" stroke="#c6c6c6" stroke-width="3.600" fill="none"/>
</svg>
<div class="t sp" style="left:1531px;top:576px;width:58px;color:#fff">Result</div><div class="t sp" style="left:1531px;top:586px;width:58px;color:#fff">Grid</div>
<div class="t sp" style="left:1531px;top:643px;width:58px;color:#7a7a7a">Form</div><div class="t sp" style="left:1531px;top:654px;width:58px;color:#7a7a7a">Editor</div>
<div class="t sp" style="left:1531px;top:712px;width:58px;color:#7a7a7a">Field</div><div class="t sp" style="left:1531px;top:722px;width:58px;color:#7a7a7a">Types</div>
<div class="abs" style="left:286px;top:764px;width:1303px;height:19px;background:#e8e8e8"></div>
<div class="abs" style="left:286px;top:764px;width:77px;height:19px;background:#fff"></div>
<div class="t" style="left:293px;top:767px;font-size:11.200px;color:#2e7bd1;letter-spacing:-.1px">Result 23</div>
<svg class="abs" style="left:348px;top:769px" width="9" height="9" viewBox="0 0 9 9"><path d="M1 1 L8 8 M8 1 L1 8" stroke="#555" stroke-width="1.100"/></svg>
<svg class="abs" style="left:1453px;top:767px" width="12" height="12" viewBox="0 0 12 12"><circle cx="6" cy="6" r="5.500" fill="#2d7dd2"/><rect x="5.200" y="2.500" width="1.600" height="4.500" fill="#fff"/><rect x="5.200" y="8" width="1.600" height="1.600" fill="#fff"/></svg>
<div class="t" style="left:1473px;top:768px;font-size:11px;color:#111;letter-spacing:-.15px">Read Only</div>
</div>

<!-- OUTPUT -->
<div id="output" class="abs" style="left:0;top:0;width:1595px;height:0">
<div class="abs hdr" style="left:286px;top:789px;width:1303px;height:21px"></div>
<div class="t" style="left:293px;top:794px;font-size:11px;color:#666;letter-spacing:.2px">Output</div>
<svg class="abs" style="left:330px;top:797px" width="1254" height="5" viewBox="0 0 1254 5"><rect x="0" y="0" width="1254" height="5" fill="url(#dp)"/></svg>
<div class="abs" style="left:286px;top:810px;width:1303px;height:28px;background:#f5f5f7"></div>
<div class="abs" style="left:314px;top:814px;width:150px;height:21px;background:#fff"></div>
<svg class="abs" style="left:293px;top:816px" width="16" height="16" viewBox="0 0 16 16"><rect x="1.500" y="5.500" width="8" height="9" fill="#f5f5f7" stroke="#333"/><path d="M4 3.500 h7.500 v9 M6 1.500 h7.500 v9" stroke="#555" stroke-width="1" fill="none"/></svg>
<div class="t" style="left:318px;top:820px;font-size:11.800px;letter-spacing:-.6px;color:#111">Action Output</div>
<div class="abs" style="left:452px;top:815px;width:11px;height:19px;background:#f0f0f0"></div>
<svg class="abs" style="left:454px;top:823px" width="7" height="4" viewBox="0 0 7 4"><path d="M.700 .300 h5.600 l-2.800 3.200 Z" fill="#111"/></svg>
<div class="abs" style="left:286px;top:837px;width:1287px;height:15px;background:#fff"></div>
<div class="abs" style="left:307px;top:837px;width:1px;height:15px;background:#dedede"></div>
<div class="abs" style="left:343px;top:837px;width:1px;height:15px;background:#dedede"></div>
<div class="abs" style="left:394px;top:837px;width:1px;height:15px;background:#dedede"></div>
<div class="abs" style="left:926px;top:837px;width:1px;height:15px;background:#dedede"></div>
<div class="abs" style="left:1459px;top:837px;width:1px;height:15px;background:#dedede"></div>
<div class="abs" style="left:1571px;top:837px;width:1px;height:15px;background:#dedede"></div>
<div class="t" style="left:314px;top:841.600px;font-size:10.200px;color:#111">#</div>
<div class="t" style="left:350px;top:841.600px;font-size:10.200px;color:#111">Time</div>
<div class="t" style="left:401px;top:841.600px;font-size:10.200px;color:#111">Action</div>
<div class="t" style="left:933px;top:841.600px;font-size:10.200px;color:#111">Message</div>
<div class="t" style="left:1466px;top:841.600px;font-size:10.200px;color:#111">Duration / Fetch</div>
<svg class="abs" style="left:1575px;top:841px" width="12" height="9" viewBox="0 0 12 9"><path d="M2 7 L6 3 L10 7" stroke="#404040" stroke-width="1.800" fill="none"/></svg>
</div>
</body>
</html>
